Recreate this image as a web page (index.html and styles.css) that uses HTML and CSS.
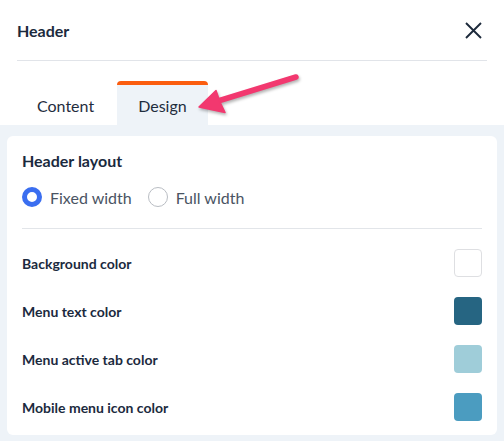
FILE: index.html
```html
<!DOCTYPE html>
<html>
<head>
<meta charset="utf-8">
<link rel="stylesheet" href="styles.css">
</head>
<body>
<div class="top">
  <h1 class="title">Header</h1>
  <svg class="close" width="17" height="17" viewBox="0 0 17 17"><path d="M1 1 L16 16 M16 1 L1 16" stroke="#1d2a3b" stroke-width="1.9" fill="none"/></svg>
</div>
<div class="tabs">
  <div class="tab">Content</div>
  <div class="tab active">Design</div>
</div>
<div class="panel">
  <div class="card">
    <h2 class="section-title">Header layout</h2>
    <div class="radios">
      <label class="radio"><span class="dot checked"></span>Fixed width</label>
      <label class="radio"><span class="dot"></span>Full width</label>
    </div>
    <div class="rows">
      <div class="row"><span class="label">Background color</span><span class="swatch sw-white"></span></div>
      <div class="row"><span class="label">Menu text color</span><span class="swatch sw-dark"></span></div>
      <div class="row"><span class="label">Menu active tab color</span><span class="swatch sw-light"></span></div>
      <div class="row"><span class="label">Mobile menu icon color</span><span class="swatch sw-mid"></span></div>
    </div>
  </div>
</div>
<svg class="arrow" width="115" height="55" viewBox="0 0 115 55">
  <line x1="106" y1="12" x2="28" y2="36" stroke="#f2386f" stroke-width="5.5" stroke-linecap="round"/>
  <path d="M9 42 L26 25.5 L30 37 L35 47.5 Z" fill="#f2386f" stroke="#f2386f" stroke-width="1.5" stroke-linejoin="round"/>
</svg>
</body>
</html>
```
FILE: styles.css
```css
* { box-sizing: border-box; }
html, body { margin: 0; padding: 0; }
body {
  width: 504px;
  height: 441px;
  background: #ffffff;
  font-family: Lato, "Liberation Sans", sans-serif;
  color: #1b2a3d;
  position: relative;
  overflow: hidden;
}
.top {
  margin: 0 17px;
  height: 61px;
  border-bottom: 1px solid #e1e4e9;
  display: flex;
  align-items: center;
  justify-content: space-between;
  padding-top: 1px;
}
.title {
  margin: 0;
  font-size: 16px;
  font-weight: 700;
  line-height: 20px;
}
.close { margin-right: 5px; display: block; }
.tabs {
  display: flex;
  gap: 3px;
  padding: 20px 0 0 17px;
  height: 64px;
}
.tab {
  height: 44px;
  padding: 4px 20px 0;
  display: flex;
  align-items: center;
  font-size: 16px;
  color: #1f2d3e;
  border-radius: 4px 4px 0 0;
}
.tab.active {
  background: #eef3f8;
  border-top: 4px solid #fb5d0f;
  padding: 0 21px;
}
.panel {
  background: #eef3f8;
  height: 316px;
  padding: 11px 7px 0;
}
.card {
  background: #fff;
  border-radius: 6px;
  padding: 15px 15px 14px;
  height: 299px;
}
.section-title {
  margin: 0;
  font-size: 16px;
  font-weight: 700;
  line-height: 20px;
  color: #1a2a3e;
}
.radios {
  display: flex;
  gap: 16px;
  margin-top: 16px;
  padding-bottom: 21px;
  border-bottom: 1px solid #e2e5e9;
}
.radio {
  display: flex;
  align-items: center;
  gap: 8px;
  font-size: 16px;
  color: #4a5463;
  height: 20px;
}
.dot {
  width: 20px;
  height: 20px;
  border-radius: 50%;
  border: 1px solid #b9bdc3;
  background: #fff;
}
.dot.checked {
  border: 5px solid #3a6ef0;
}
.rows {
  display: flex;
  flex-direction: column;
  gap: 20px;
  margin-top: 20px;
}
.row {
  display: flex;
  align-items: center;
  justify-content: space-between;
  height: 28px;
}
.label {
  font-size: 14px;
  font-weight: 700;
  color: #1b2a3e;
}
.swatch {
  width: 28px;
  height: 28px;
  border-radius: 4px;
}
.sw-white { background: #fff; border: 1px solid #dedfe2; }
.sw-dark { background: #266582; }
.sw-light { background: #9fcdd9; }
.sw-mid { background: #4b9cc0; }
.arrow {
  position: absolute;
  left: 190px;
  top: 65px;
  filter: drop-shadow(1px 2px 1.5px rgba(0,0,0,0.3));
}
```
